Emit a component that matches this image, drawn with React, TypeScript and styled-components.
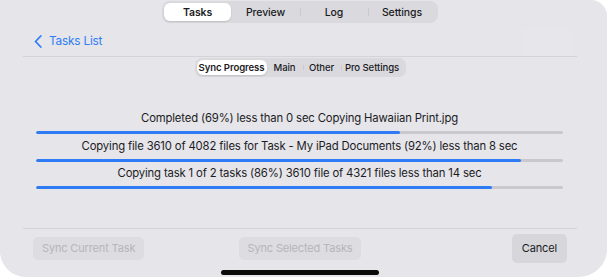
import React from "react";
import styled, { createGlobalStyle } from "styled-components";

const Global = createGlobalStyle`
  html, body { margin: 0; padding: 0; background: #ffffff; }
  body { font-family: Inter, "Noto Sans", "Liberation Sans", sans-serif; -webkit-font-smoothing: antialiased; }
  * { box-sizing: border-box; }
`;

const Window = styled.div`
  position: relative;
  width: 607px;
  height: 277px;
  background: #e5e5ea;
  border-radius: 0 16px 28px 26px;
  display: flex;
  flex-direction: column;
  overflow: hidden;
`;

const Column = styled.div`
  width: 600px;
  display: flex;
  flex-direction: column;
  flex: 1;
`;

const Segmented = styled.div<{ $top?: boolean }>`
  align-self: center;
  display: flex;
  padding: 2px;
  background: #d9d9de;
  border-radius: ${(p) => (p.$top ? "8px" : "7px")};
  margin-top: 1px;
  height: ${(p) => (p.$top ? "22px" : "19px")};
`;

const Segment = styled.div<{ $active?: boolean; $width?: number; $small?: boolean; $divider?: boolean }>`
  position: relative;
  display: flex;
  align-items: center;
  justify-content: center;
  ${(p) => (p.$width ? `width: ${p.$width}px;` : "padding: 0 6px;")}
  font-size: ${(p) => (p.$small ? "9.6px" : "10.5px")};
  font-weight: ${(p) => (p.$active ? 600 : 500)};
  color: #1c1c1e;
  background: ${(p) => (p.$active ? "#ffffff" : "transparent")};
  border-radius: 6px;
  box-shadow: ${(p) => (p.$active ? "0 1px 2px rgba(0,0,0,0.12)" : "none")};
  letter-spacing: -0.1px;
  &::before {
    content: "";
    display: ${(p) => (p.$divider ? "block" : "none")};
    position: absolute;
    left: 0;
    top: 5px;
    bottom: 5px;
    width: 1px;
    background: #c9c9ce;
  }
`;

const NavBar = styled.div`
  height: 34px;
  margin: 0 23px;
  border-bottom: 1px solid #d3d3d8;
  display: flex;
  align-items: center;
  justify-content: space-between;
  padding-left: 11px;
  padding-top: 3px;
`;

const BackLink = styled.div`
  display: flex;
  align-items: center;
  gap: 7px;
  color: #2f7cf6;
  font-size: 11.8px;
  letter-spacing: -0.2px;
`;

const Ghost = styled.div`
  width: 50px;
  height: 27px;
  margin-right: 5px;
  margin-top: 2px;
  background: rgba(255, 255, 255, 0.07);
`;

const Progress = styled.div`
  display: flex;
  flex-direction: column;
  padding: 0 37px 0 36px;
  margin-top: 34px;
`;

const Row = styled.div`
  display: flex;
  flex-direction: column;
  align-items: stretch;
  height: 27.5px;
`;

const Label = styled.div`
  text-align: center;
  font-size: 11.3px;
  color: #1c1c1e;
  line-height: 14px;
  letter-spacing: -0.15px;
  height: 20px;
`;

const Track = styled.div`
  height: 3px;
  border-radius: 2px;
  background: #c8c8cd;
  overflow: hidden;
`;

const Fill = styled.div`
  height: 100%;
  background: #2f7bf5;
  border-radius: 2px;
`;

const Footer = styled.div`
  margin: auto 23px 0;
  border-top: 1px solid #d3d3d8;
  display: grid;
  grid-template-columns: 1fr auto 1fr;
  align-items: center;
  padding: 3px 10px 0 10px;
  height: 36px;
`;

const Button = styled.div<{ $disabled?: boolean; $big?: boolean; $align?: string }>`
  justify-self: ${(p) => p.$align || "center"};
  display: flex;
  align-items: center;
  justify-content: center;
  height: ${(p) => (p.$big ? "29px" : "23px")};
  padding: 0 ${(p) => (p.$big ? "10px" : "9px")};
  border-radius: 5px;
  background: ${(p) => (p.$disabled ? "#dcdce1" : "#d6d6db")};
  color: ${(p) => (p.$disabled ? "#b6b6bb" : "#1c1c1e")};
  font-size: 11px;
  letter-spacing: -0.15px;
`;

const HomeIndicator = styled.div`
  align-self: flex-start;
  margin: 6px 0 2px 221px;
  width: 158px;
  height: 5px;
  border-radius: 3px;
  background: #0a0a0a;
`;

const rows = [
  { text: "Completed (69%) less than 0 sec Copying Hawaiian Print.jpg", pct: 69 },
  { text: "Copying file 3610 of 4082 files for Task - My iPad Documents (92%) less than 8 sec", pct: 92 },
  { text: "Copying task 1 of 2 tasks (86%) 3610 file of 4321 files less than 14 sec", pct: 86.5 },
];

export default function App() {
  return (
    <>
      <Global />
      <Window>
        <Column>
          <Segmented $top>
            <Segment $active $width={67}>Tasks</Segment>
            <Segment $width={69}>Preview</Segment>
            <Segment $width={68} $divider>Log</Segment>
            <Segment $width={68} $divider>Settings</Segment>
          </Segmented>
          <NavBar>
            <BackLink>
              <svg width="8" height="13" viewBox="0 0 8 13" fill="none">
                <path d="M6.8 1 1.5 6.5l5.3 5.5" stroke="#2f7cf6" strokeWidth="1.8" strokeLinecap="round" strokeLinejoin="round" />
              </svg>
              Tasks List
            </BackLink>
            <Ghost />
          </NavBar>
          <Segmented>
            <Segment $active $small $width={70}>Sync Progress</Segment>
            <Segment $small $width={36}>Main</Segment>
            <Segment $small $width={38} $divider>Other</Segment>
            <Segment $small $width={63} $divider>Pro Settings</Segment>
          </Segmented>
          <Progress>
            {rows.map((r) => (
              <Row key={r.text}>
                <Label>{r.text}</Label>
                <Track>
                  <Fill style={{ width: `${r.pct}%` }} />
                </Track>
              </Row>
            ))}
          </Progress>
          <Footer>
            <Button $disabled $align="start">Sync Current Task</Button>
            <Button $disabled>Sync Selected Tasks</Button>
            <Button $big $align="end">Cancel</Button>
          </Footer>
          <HomeIndicator />
        </Column>
      </Window>
    </>
  );
}
